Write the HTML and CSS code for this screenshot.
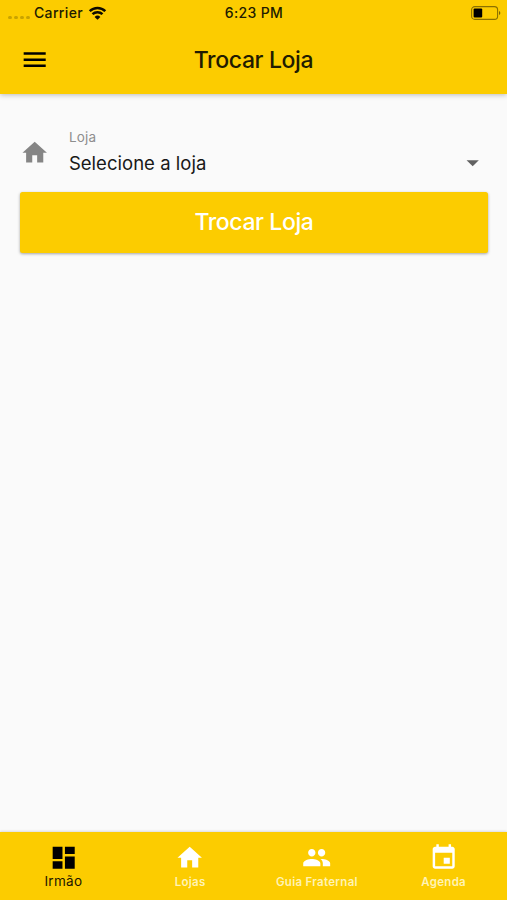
FILE: index.html
```
<!DOCTYPE html>
<html lang="pt-BR">
<head>
    <meta charset="UTF-8">
    <meta name="viewport" content="width=device-width, initial-scale=1.0">
    <title>Trocar Loja</title>
    <link rel="stylesheet" href="styles.css">
</head>
<body>
    <header class="header">
        <div class="status-bar">
            <div class="carrier">
                <span class="signal"><i></i><i></i><i></i><i></i></span>
                <span class="carrier-name">Carrier</span>
                <svg class="wifi" viewBox="0 0 18 14">
                    <path d="M1.2 5.2a11.2 11.2 0 0 1 15.6 0M4 8.2a7.2 7.2 0 0 1 10 0" fill="none" stroke="#0d0b00" stroke-width="2.5"/>
                    <path d="M9 13.8l-2.9-2.9a4.1 4.1 0 0 1 5.8 0z" fill="#0d0b00"/>
                </svg>
            </div>
            <span class="time">6:23 PM</span>
            <svg class="battery" viewBox="0 0 30 14">
                <rect x=".6" y=".6" width="26" height="12.8" rx="3.2" fill="none" stroke="#8a7000" stroke-width="1.1"/>
                <rect x="2.6" y="2.5" width="8.6" height="9" rx="1" fill="#000"/>
                <path d="M28 5v4c1.8-.7 1.8-3.3 0-4z" fill="#7d6500"/>
            </svg>
        </div>
        <div class="toolbar">
            <svg class="icon menu" viewBox="0 0 24 24"><path d="M3 18h18v-2H3v2zm0-5h18v-2H3v2zm0-7v2h18V6H3z"/></svg>
            <h1 class="title">Trocar Loja</h1>
        </div>
    </header>

    <main class="content">
        <div class="field">
            <svg class="icon field-icon" viewBox="0 0 24 24"><path d="M10 20v-6h4v6h5v-8h3L12 3 2 12h3v8z"/></svg>
            <div class="field-text">
                <span class="label">Loja</span>
                <span class="value">Selecione a loja</span>
            </div>
            <svg class="icon arrow" viewBox="0 0 24 24"><path d="M7 10l5 5 5-5z"/></svg>
        </div>
        <button class="button">Trocar Loja</button>
    </main>

    <nav class="tabs">
        <a class="tab active">
            <svg class="icon" viewBox="0 0 24 24"><path d="M3 13h8V3H3v10zm0 8h8v-6H3v6zm10 0h8V11h-8v10zm0-18v6h8V3h-8z"/></svg>
            <span>Irmão</span>
        </a>
        <a class="tab">
            <svg class="icon" viewBox="0 0 24 24"><path d="M10 20v-6h4v6h5v-8h3L12 3 2 12h3v8z"/></svg>
            <span>Lojas</span>
        </a>
        <a class="tab">
            <svg class="icon" viewBox="0 0 24 24"><path d="M16 11c1.660 0 2.990-1.340 2.990-3S17.660 5 16 5c-1.660 0-3 1.340-3 3s1.340 3 3 3zm-8 0c1.660 0 2.990-1.340 2.990-3S9.660 5 8 5C6.340 5 5 6.340 5 8s1.340 3 3 3zm0 2c-2.330 0-7 1.170-7 3.500V19h14v-2.500c0-2.330-4.670-3.500-7-3.500zm8 0c-.29 0-.62.020-.97.050 1.160.84 1.970 1.970 1.970 3.450V19h6v-2.500c0-2.330-4.670-3.500-7-3.500z"/></svg>
            <span>Guia Fraternal</span>
        </a>
        <a class="tab">
            <svg class="icon" viewBox="0 0 24 24"><path d="M17 12h-5v5h5v-5zM16 1v2H8V1H6v2H5c-1.110 0-1.990.9-1.990 2L3 19c0 1.100.89 2 2 2h14c1.100 0 2-.9 2-2V5c0-1.100-.9-2-2-2h-1V1h-2zm3 18H5V8h14v11z"/></svg>
            <span>Agenda</span>
        </a>
    </nav>
</body>
</html>
```
FILE: styles.css
```
* {
    box-sizing: border-box;
}

body {
    margin: 0;
    height: 900px;
    display: flex;
    flex-direction: column;
    overflow: hidden;
    background: #fafafa;
    font-family: Inter, Roboto, sans-serif;
}

.icon {
    display: block;
    flex: none;
    width: 29.4px;
    height: 29.4px;
    fill: currentColor;
}

/* Header */
.header {
    height: 94px;
    background: #fccc00;
    color: #211b00;
    box-shadow: 0 1px 5px rgba(0, 0, 0, 0.25);
}

.status-bar {
    display: grid;
    grid-template-columns: 1fr auto 1fr;
    align-items: center;
    height: 26px;
    padding: 0 6px 0 8px;
    font-size: 14px;
    font-weight: 500;
    letter-spacing: 0.35px;
    line-height: 26px;
}

.carrier {
    display: flex;
    align-items: center;
}

.signal {
    display: flex;
    gap: 2px;
    width: 26px;
    padding-top: 8px;
}

.signal i {
    width: 4px;
    height: 3px;
    border-radius: 2px;
    background: #c9a300;
}

.wifi {
    width: 19px;
    height: 14px;
    margin-left: 5px;
}

.time {
    margin-right: 1px;
}

.battery {
    justify-self: end;
    width: 30px;
    height: 14px;
}

.toolbar {
    display: grid;
    grid-template-columns: 30px 1fr 30px;
    align-items: center;
    height: 68px;
    padding: 0 20px;
}

.menu {
    color: #000;
}

.title {
    margin: 0;
    font-size: 23px;
    font-weight: 450;
    letter-spacing: -0.35px;
    text-align: center;
}

/* Form */
.content {
    flex: 1;
    padding: 34px 19px 0 20px;
}

.field {
    display: flex;
    align-items: center;
    height: 50px;
    margin-bottom: 13.5px;
}

.field-icon {
    color: #858585;
}

.field-text {
    display: flex;
    flex: 1;
    flex-direction: column;
    padding-left: 19.5px;
}

.label {
    color: #8e8e8e;
    font-size: 13.5px;
    letter-spacing: 0.2px;
    line-height: 19px;
}

.value {
    color: #181818;
    font-size: 18.5px;
    letter-spacing: 0.03px;
    line-height: 32px;
}

.arrow {
    margin: 19px 1px 0 0;
    color: #616161;
}

.button {
    display: block;
    width: 100%;
    height: 61px;
    padding: 0;
    border: 0;
    border-radius: 2.5px;
    background: #fccc00;
    box-shadow: 0 1px 3px rgba(0, 0, 0, 0.35);
    color: #fff;
    font: 500 23px Inter, Roboto, sans-serif;
    letter-spacing: -0.4px;
}

/* Bottom navigation */
.tabs {
    display: flex;
    height: 68.5px;
    background: #fccc00;
    box-shadow: 0 -1px 2px rgba(0, 0, 0, 0.12);
}

.tab {
    display: flex;
    flex: 1;
    flex-direction: column;
    align-items: center;
    padding-top: 11px;
    color: #fff;
    font-size: 11.5px;
    font-weight: 600;
    letter-spacing: 0.3px;
    line-height: 20px;
}

.tab span {
    color: #fff3b5;
}

.active {
    color: #000;
    font-size: 13.5px;
    font-weight: 400;
    line-height: 18px;
}

.active span {
    color: #1c1700;
}
```
